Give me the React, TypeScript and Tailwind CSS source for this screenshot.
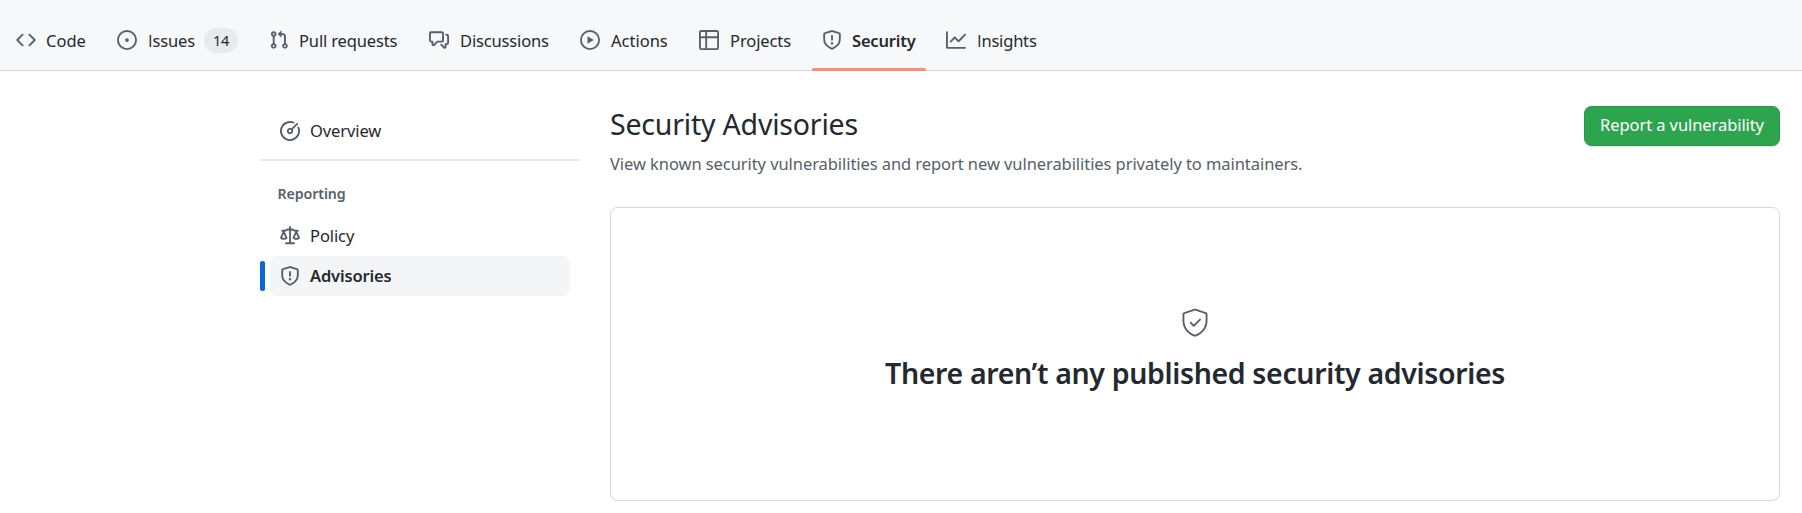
import type { ReactNode } from "react";

const icons = {
  code: "M4.72 3.22a.75.75 0 011.06 1.06L2.06 8l3.72 3.72a.75.75 0 11-1.06 1.06L.47 8.53a.75.75 0 010-1.06l4.25-4.25zm6.56 0a.75.75 0 10-1.06 1.06L13.94 8l-3.72 3.72a.75.75 0 101.06 1.06l4.25-4.25a.75.75 0 000-1.06l-4.25-4.25z",
  issue: "M8 9.5a1.5 1.5 0 100-3 1.5 1.5 0 000 3zM8 0a8 8 0 100 16A8 8 0 008 0zM1.5 8a6.5 6.5 0 1113 0 6.5 6.5 0 01-13 0z",
  pull: "M7.177 3.073L9.573.677A.25.25 0 0110 .854v4.792a.25.25 0 01-.427.177L7.177 3.427a.25.25 0 010-.354zM3.75 2.5a.75.75 0 100 1.5.75.75 0 000-1.5zm-2.25.75a2.25 2.25 0 113 2.122v5.256a2.251 2.251 0 11-1.5 0V5.372A2.25 2.25 0 011.5 3.25zM11 2.5h-1V4h1a1 1 0 011 1v5.628a2.251 2.251 0 101.5 0V5A2.5 2.5 0 0011 2.5zm1 10.25a.75.75 0 111.5 0 .75.75 0 01-1.5 0zM3.75 12a.75.75 0 100 1.5.75.75 0 000-1.5z",
  discussion: "M1.5 2.75a.25.25 0 01.25-.25h8.5a.25.25 0 01.25.25v5.5a.25.25 0 01-.25.25h-3.5a.75.75 0 00-.53.22L3.5 11.44V9.25a.75.75 0 00-.75-.75h-1a.25.25 0 01-.25-.25v-5.5zM1.75 1A1.75 1.75 0 000 2.75v5.5C0 9.216.784 10 1.75 10H2v1.543a1.457 1.457 0 002.487 1.03L7.061 10h3.189A1.75 1.75 0 0012 8.25v-5.5A1.75 1.75 0 0010.25 1h-8.5zM14.5 4.75a.25.25 0 00-.25-.25h-.5a.75.75 0 110-1.5h.5c.966 0 1.75.784 1.75 1.75v5.5A1.75 1.75 0 0114.25 12H14v1.543a1.457 1.457 0 01-2.487 1.03L9.22 12.28a.75.75 0 111.06-1.06l2.22 2.22v-2.19a.75.75 0 01.75-.75h1a.25.25 0 00.25-.25v-5.5z",
  play: "M1.5 8a6.5 6.5 0 1113 0 6.5 6.5 0 01-13 0zM8 0a8 8 0 100 16A8 8 0 008 0zM6.379 5.227A.25.25 0 006 5.442v5.117a.25.25 0 00.379.214l4.264-2.559a.25.25 0 000-.428L6.379 5.227z",
  table: "M0 1.75C0 .784.784 0 1.75 0h12.5C15.216 0 16 .784 16 1.75v12.5A1.75 1.75 0 0114.25 16H1.75A1.75 1.75 0 010 14.25V1.75zM1.5 6.5v7.75c0 .138.112.25.25.25H5v-8H1.5zM5 5H1.5V1.75a.25.25 0 01.25-.25H5V5zm1.5 1.5v8h7.75a.25.25 0 00.25-.25V6.5h-8zm8-1.5h-8V1.5h7.75a.25.25 0 01.25.25V5z",
  shield: "M7.467.133a1.75 1.75 0 011.066 0l5.25 1.68A1.75 1.75 0 0115 3.48V7c0 1.566-.32 3.182-1.303 4.682-.983 1.498-2.585 2.813-5.032 3.855a1.7 1.7 0 01-1.33 0c-2.447-1.042-4.049-2.357-5.032-3.855C1.32 10.182 1 8.566 1 7V3.48a1.75 1.75 0 011.217-1.667l5.25-1.68zm.61 1.429a.25.25 0 00-.153 0l-5.25 1.68a.25.25 0 00-.174.238V7c0 1.358.275 2.666 1.057 3.86.784 1.194 2.121 2.34 4.366 3.297a.2.2 0 00.154 0c2.245-.956 3.582-2.104 4.366-3.298C13.225 9.666 13.5 8.36 13.5 7V3.48a.25.25 0 00-.174-.237l-5.25-1.68zM9 10.5a1 1 0 11-2 0 1 1 0 012 0zm-.25-5.75a.75.75 0 00-1.5 0v3a.75.75 0 001.5 0v-3z",
  graph: "M1.5 1.75a.75.75 0 00-1.5 0v12.5c0 .414.336.75.75.75h14.5a.75.75 0 000-1.5H1.5V1.75zm14.28 2.53a.75.75 0 00-1.06-1.06L10 7.94 7.53 5.47a.75.75 0 00-1.06 0L3.22 8.72a.75.75 0 001.06 1.06L7 7.06l2.47 2.47a.75.75 0 001.06 0l5.25-5.25z",
  meter: "M8 1.5a6.5 6.5 0 106.016 4.035.75.75 0 011.388-.57 8 8 0 11-4.37-4.37.75.75 0 01-.569 1.389A6.479 6.479 0 008 1.5zm6.28.22a.75.75 0 010 1.06l-4.063 4.064a2.5 2.5 0 11-1.06-1.06L13.22 1.72a.75.75 0 011.06 0zM7 8a1 1 0 112 0 1 1 0 01-2 0z",
  law: "M8.75.75a.75.75 0 00-1.5 0V2h-.984c-.305 0-.604.08-.869.23l-1.288.737A.25.25 0 013.984 3H1.75a.75.75 0 000 1.5h.428L.066 9.192a.75.75 0 00.154.838l.53-.53-.53.53v.001l.002.002.002.002.006.006.016.015.045.04a3.514 3.514 0 00.686.45A4.492 4.492 0 003 11c.88 0 1.556-.22 2.023-.454a3.515 3.515 0 00.686-.45l.045-.04.016-.015.006-.006.002-.002.001-.002L5.25 9.5l.53.53a.75.75 0 00.154-.838L3.822 4.5h.162c.305 0 .604-.08.869-.23l1.289-.737a.25.25 0 01.124-.033h.984V13h-2.5a.75.75 0 000 1.5h6.5a.75.75 0 000-1.5h-2.5V3.5h.984a.25.25 0 01.124.033l1.29.736c.264.152.563.231.868.231h.162l-2.112 4.692a.75.75 0 00.154.838l.53-.53-.53.53v.001l.002.002.002.002.006.006.016.015.045.04a3.517 3.517 0 00.686.45A4.492 4.492 0 0013 11c.88 0 1.556-.22 2.023-.454a3.512 3.512 0 00.686-.45l.045-.04.01-.01.006-.005.006-.006.002-.002.001-.002-.529-.531.53.53a.75.75 0 00.154-.838L13.823 4.5h.427a.75.75 0 000-1.5h-2.234a.25.25 0 01-.124-.033l-1.29-.736A1.75 1.75 0 009.735 2H8.75V.75zM1.695 9.227c.285.135.718.273 1.305.273s1.02-.138 1.305-.273L3 6.327l-1.305 2.9zm10 0c.285.135.718.273 1.305.273s1.02-.138 1.305-.273L13 6.327l-1.305 2.9z",
};

function Icon({ name }: { name: keyof typeof icons }) {
  return (
    <svg viewBox="0 0 16 16" className="size-5 shrink-0 fill-[#57606a]" aria-hidden="true">
      <path fillRule="evenodd" d={icons[name]} />
    </svg>
  );
}

function PlainI() {
  return <span className="font-['Open_Sans',sans-serif]">I</span>;
}

type TabProps = {
  icon: keyof typeof icons;
  className: string;
  textClass: string;
  count?: number;
  active?: boolean;
  children: ReactNode;
};

function Tab({ icon, className, textClass, count, active, children }: TabProps) {
  return (
    <a className={`relative flex h-[60px] shrink-0 items-center pl-2.5 ${className}`}>
      <Icon name={icon} />
      <span className={`ml-2.5 pt-px whitespace-nowrap ${textClass}`}>{children}</span>
      {count !== undefined && (
        <span className="ml-2.5 flex h-[25px] w-[34px] shrink-0 items-center justify-center rounded-full bg-[#e8ebed] text-[14.5px] tracking-[-0.3px]">
          {count}
        </span>
      )}
      {active && <span className="absolute bottom-[-1px] left-0 h-[3px] w-[114px] rounded-full bg-[#fd8c73]" />}
    </a>
  );
}

export default function App() {
  return (
    <div className="h-[513px] w-[1802px] overflow-hidden bg-white font-['Noto_Sans',sans-serif] text-[16.5px] leading-[26px] text-[#24292f]">
      <nav className="flex h-[71px] items-end border-b border-[#d0d7de] bg-[#f6f8fa] pl-1.5">
        <Tab icon="code" className="w-[101px]" textClass="w-[42px]">Code</Tab>
        <Tab icon="issue" className="w-[152px]" textClass="w-[47px] pl-px tracking-[-0.15px]" count={14}><PlainI />ssues</Tab>
        <Tab icon="pull" className="w-[160px]" textClass="w-[98px] tracking-[-0.15px]">Pull requests</Tab>
        <Tab icon="discussion" className="w-[151px]" textClass="w-[88px] pl-px tracking-[-0.15px]">Discussions</Tab>
        <Tab icon="play" className="w-[119px]" textClass="w-[58px] pl-px">Actions</Tab>
        <Tab icon="table" className="w-[123px]" textClass="w-[62px] pl-px tracking-[-0.1px]">Projects</Tab>
        <Tab icon="shield" className="w-[124px]" textClass="w-[64px] font-semibold tracking-[-0.2px]" active>Security</Tab>
        <Tab icon="graph" className="w-[110px]" textClass="w-[60px] pl-px tracking-[-0.2px]"><PlainI />nsights</Tab>
      </nav>

      <div className="flex pl-[260px]">
        <aside className="w-80 shrink-0 pt-10">
          <a className="flex h-10 items-center gap-2.5 pl-5">
            <Icon name="meter" />
            <span className="tracking-[-0.1px]">Overview</span>
          </a>
          <hr className="mt-2 h-0.5 border-0 bg-[#e7eaee]" />
          <h3 className="mt-[21px] pl-[17.5px] text-[14.2px] leading-6 font-semibold tracking-[-0.1px] text-[#57606a]">Reporting</h3>
          <a className="mt-2.5 flex h-10 items-center gap-2.5 pl-5">
            <Icon name="law" />
            <span className="tracking-[-0.1px]">Policy</span>
          </a>
          <div className="flex items-center gap-[5px]">
            <span className="h-[30px] w-[5px] rounded-[2px] bg-[#0969da]" />
            <a className="flex h-10 w-[300px] items-center gap-2.5 rounded-[7.5px] bg-[#f4f5f7] pl-2.5">
              <Icon name="shield" />
              <span className="font-semibold tracking-[-0.15px]">Advisories</span>
            </a>
          </div>
        </aside>

        <main className="ml-[30px] w-[1170px] shrink-0 pt-[35px]">
          <div className="flex h-[101px] items-start justify-between">
            <div className="-mt-px">
              <h1 className="text-[28.5px] leading-[38px] tracking-[-0.2px]">Security Advisories</h1>
              <p className="mt-2 whitespace-nowrap tracking-[-0.07px] text-[#57606a]">
                View known security vulnerabilities and report new vulnerabilities privately to maintainers.
              </p>
            </div>
            <button className="flex h-10 w-[196px] items-center justify-center rounded-[7.5px] border border-[#2b9249] bg-[#2da44e] pb-0.5 tracking-[-0.08px] whitespace-nowrap text-white shadow-[0_1px_0_rgba(27,31,36,0.1)]">
              Report a vulnerability
            </button>
          </div>
          <section className="flex h-[294px] flex-col items-center rounded-[7.5px] border border-[#d0d7de] pt-[100px]">
            <svg viewBox="0 0 24 24" className="size-[30px] fill-[#57606a]" aria-hidden="true">
              <path d="M16.53 9.78a.75.75 0 00-1.06-1.06L11 13.19l-1.97-1.97a.75.75 0 00-1.06 1.06l2.5 2.5a.75.75 0 001.06 0l5-5z" />
              <path fillRule="evenodd" d="M12.54.637a1.75 1.75 0 00-1.08 0L3.21 3.312A1.75 1.75 0 002 4.976V10c0 6.19 3.77 10.705 9.401 12.83.386.145.812.145 1.198 0C18.229 20.704 22 16.19 22 10V4.976c0-.759-.49-1.43-1.21-1.664L12.54.637zm-.617 1.426a.25.25 0 01.154 0l8.25 2.676a.25.25 0 01.173.237V10c0 5.461-3.28 9.483-8.43 11.426a.2.2 0 01-.14 0C6.78 19.483 3.5 15.46 3.5 10V4.976c0-.108.069-.203.173-.237l8.25-2.676z" />
            </svg>
            <h2 className="mt-[15px] text-[28.5px] leading-[40px] font-semibold tracking-[-0.35px]">There aren’t any published security advisories</h2>
          </section>
        </main>
      </div>
    </div>
  );
}
